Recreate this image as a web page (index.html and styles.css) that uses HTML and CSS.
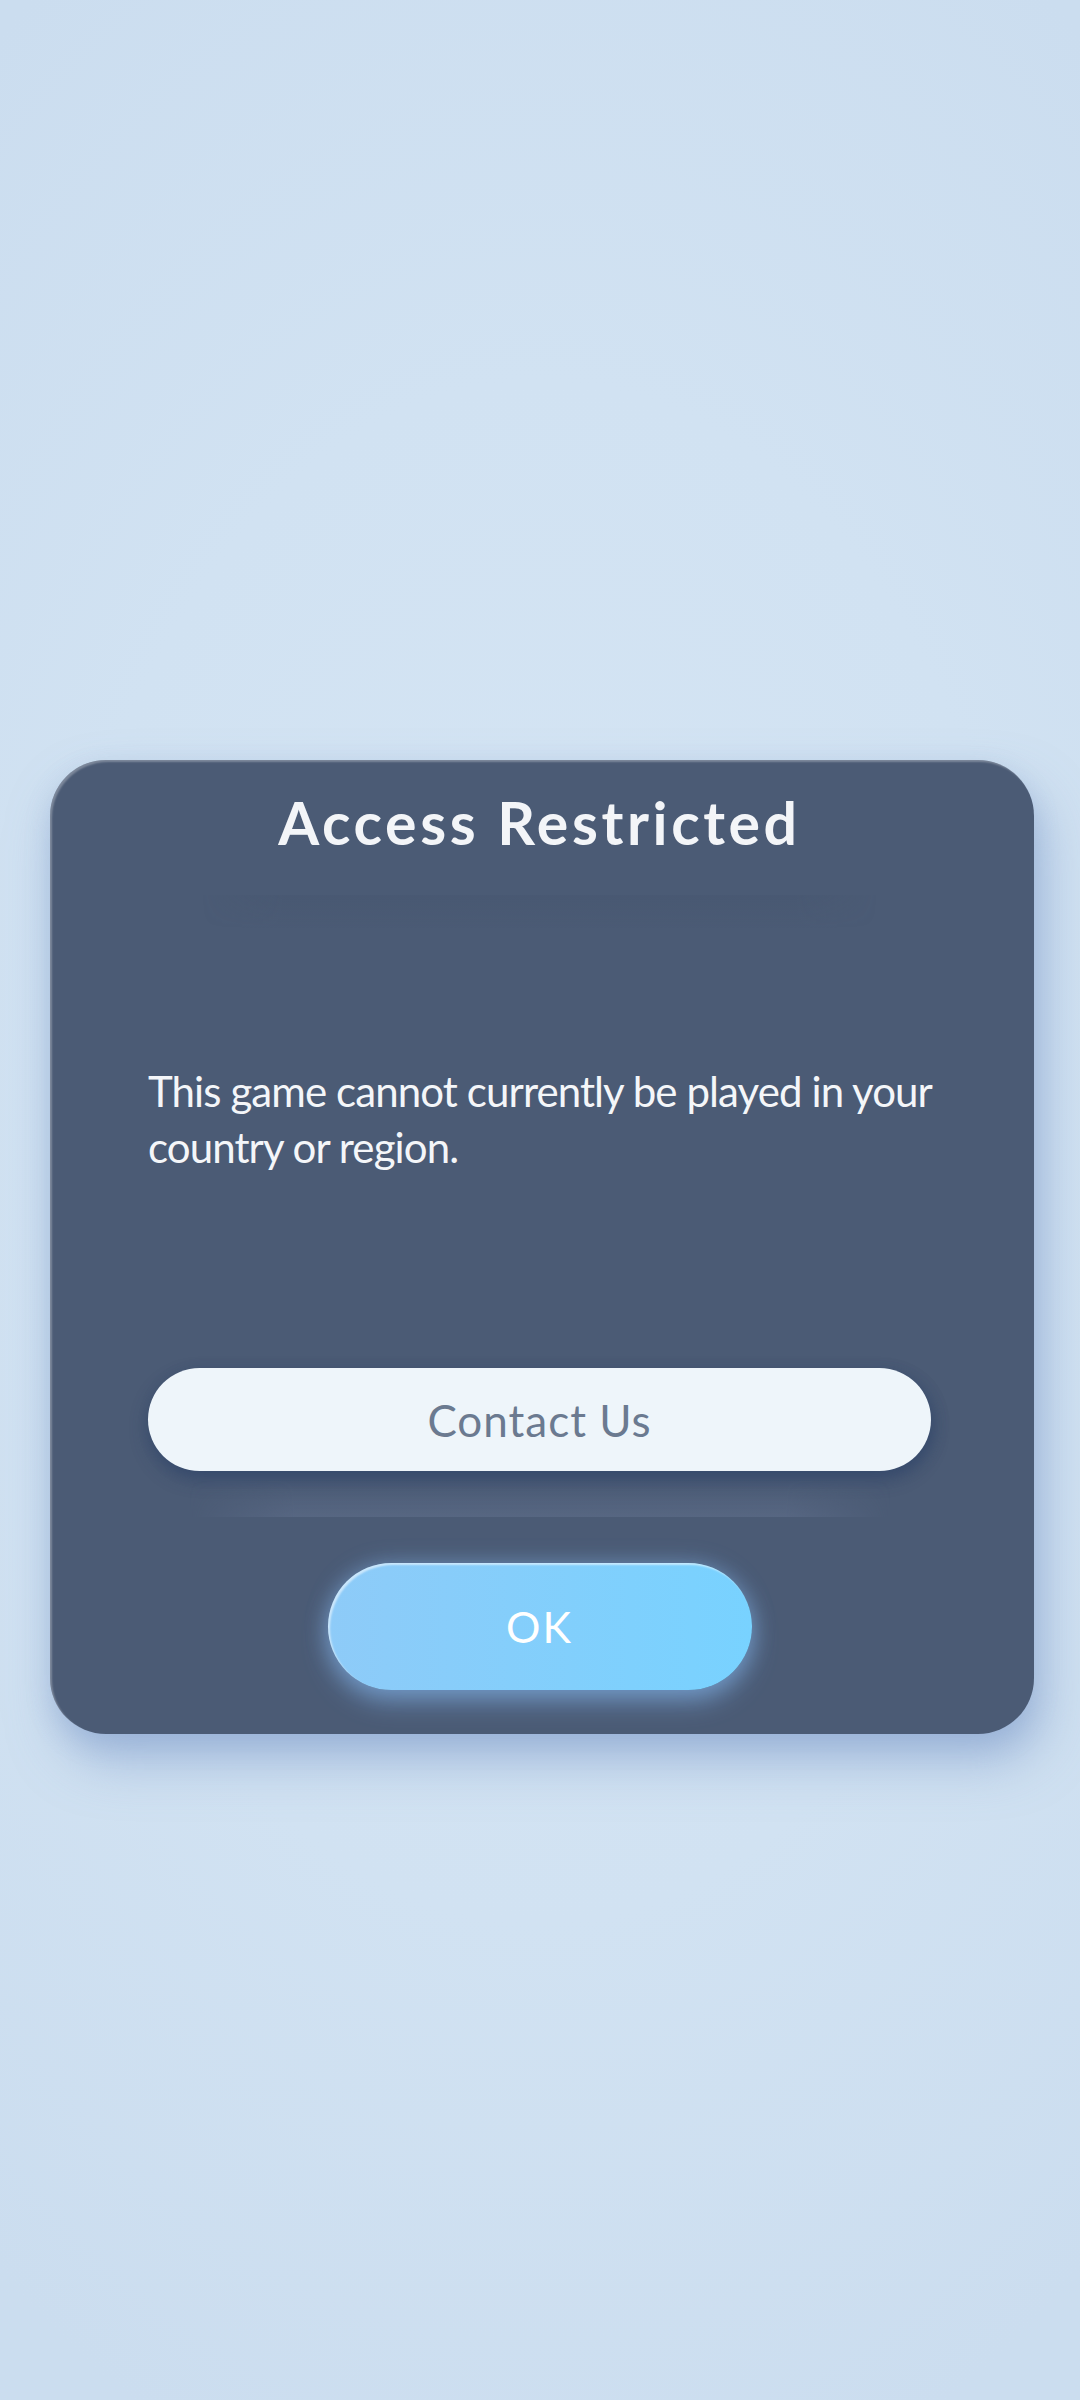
FILE: index.html
```html
<!DOCTYPE html>
<html lang="en">
<head>
<meta charset="utf-8">
<title>Access Restricted</title>
<link rel="stylesheet" href="styles.css">
</head>
<body>
<main class="screen">
  <section class="dialog">
    <h1 class="dialog-title">Access Restricted</h1>
    <div class="title-band"></div>
    <p class="dialog-text">This game cannot currently be played in your<br>country or region.</p>
    <button class="btn btn-contact">Contact Us</button>
    <div class="reflect-band"></div>
    <button class="btn btn-ok">OK</button>
  </section>
</main>
</body>
</html>
```
FILE: styles.css
```css
html, body {
  margin: 0;
  padding: 0;
}
body {
  width: 1080px;
  height: 2400px;
  overflow: hidden;
  background: radial-gradient(ellipse 900px 1400px at 50% 48%, #d5e5f4 0%, #d1e2f2 55%, #cbddef 100%);
  font-family: Lato, "Open Sans", sans-serif;
}
.screen {
  padding-top: 760px;
  display: flex;
  flex-direction: column;
  align-items: flex-start;
}
.dialog {
  box-sizing: border-box;
  margin-left: 50px;
  width: 984px;
  padding: 28px 103px 44px 98px;
  background: #4b5b75;
  border-radius: 56px;
  box-shadow: inset 2px 2px 2px rgba(255,255,255,0.28),
              10px 28px 50px rgba(120,150,200,0.5),
              0 10px 24px rgba(120,150,200,0.25);
  display: flex;
  flex-direction: column;
  align-items: center;
}
.dialog-title {
  margin: 0;
  height: 70px;
  line-height: 70px;
  font-size: 59px;
  font-weight: 700;
  color: #f3f5f8;
  letter-spacing: 3.6px;
  text-align: center;
  white-space: nowrap;
}
.title-band {
  margin-top: 37px;
  width: 675px;
  height: 33px;
  background: linear-gradient(to bottom, rgba(60,75,100,0.14), rgba(75,91,117,0));
  -webkit-mask-image: linear-gradient(to right, transparent, #000 12%, #000 88%, transparent);
  mask-image: linear-gradient(to right, transparent, #000 12%, #000 88%, transparent);
}
.dialog-text {
  align-self: stretch;
  margin: 135px 0 0;
  font-size: 42px;
  line-height: 56px;
  letter-spacing: -0.9px;
  color: #f4f6f9;
  white-space: nowrap;
}
.btn {
  border: none;
  padding: 0;
  font-family: Lato, "Open Sans", sans-serif;
  display: flex;
  align-items: center;
  justify-content: center;
}
.btn-contact {
  margin-top: 193px;
  width: 783px;
  height: 103px;
  border-radius: 52px;
  background: #eef5fa;
  color: #6b7a90;
  font-size: 44px;
  letter-spacing: 1px;
  box-shadow: 0 8px 18px rgba(40,62,102,0.45), 4px 4px 14px rgba(40,62,102,0.3);
}
.reflect-band {
  margin-top: 9px;
  width: 702px;
  height: 37px;
  background: linear-gradient(to bottom, rgba(75,91,117,0), rgba(105,120,150,0.4));
  -webkit-mask-image: linear-gradient(to right, transparent, #000 15%, #000 85%, transparent);
  mask-image: linear-gradient(to right, transparent, #000 15%, #000 85%, transparent);
}
.btn-ok {
  margin-top: 46px;
  width: 424px;
  height: 127px;
  border-radius: 64px;
  background: linear-gradient(to right, #8ecbf8, #78d2ff);
  color: #ffffff;
  font-size: 43px;
  letter-spacing: 2px;
  box-shadow: inset 2px 2px 2px rgba(255,255,255,0.55),
              0 12px 26px rgba(140,195,255,0.45),
              0 0 22px rgba(140,195,255,0.35);
}
```
